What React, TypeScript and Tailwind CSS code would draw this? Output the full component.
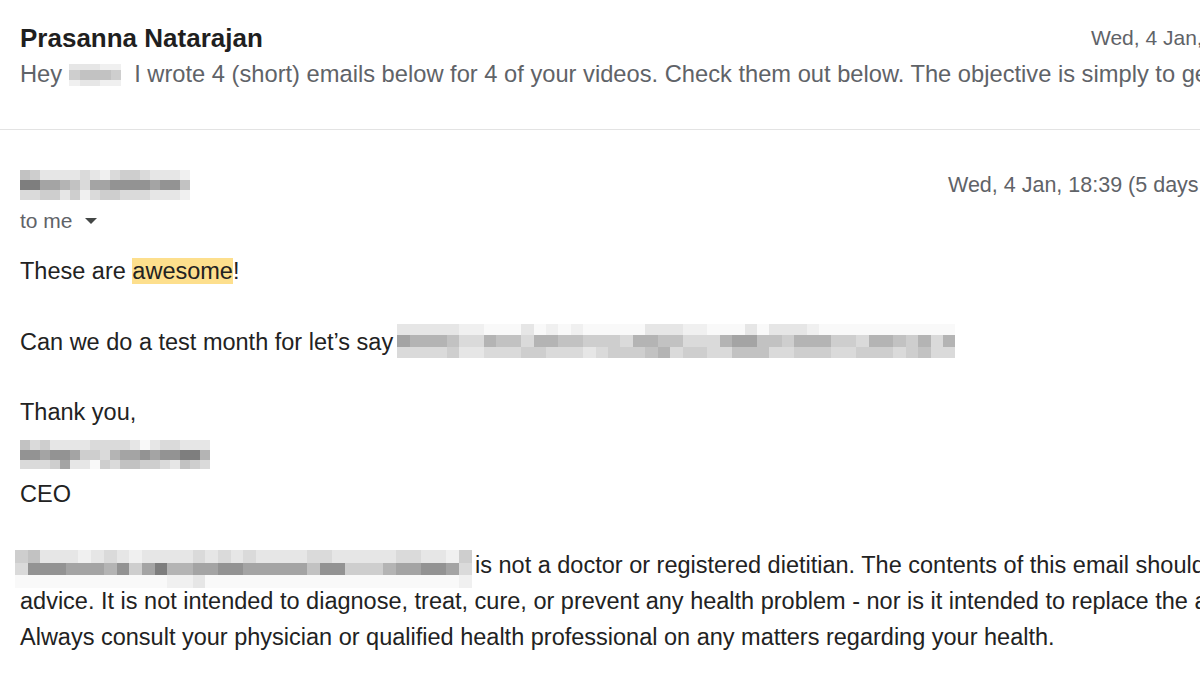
import clsx from 'clsx';

const SHADES: Record<string, string> = {
  '0': 'bg-[#f9f9f9]',
  '1': 'bg-[#f0f0f0]',
  '2': 'bg-[#e6e6e6]',
  '3': 'bg-[#dadada]',
  '4': 'bg-[#cecece]',
  '5': 'bg-[#c2c2c2]',
  '6': 'bg-[#b4b4b4]',
  '7': 'bg-[#a4a4a4]',
  '8': 'bg-[#939393]',
  '9': 'bg-[#7e7e7e]',
};

type Row = { h: string; cells: string };

// pixelated blur block, used where the screenshot hides names
function Mosaic({ rows, className }: { rows: Row[]; className?: string }) {
  return (
    <div className={clsx('flex shrink-0 flex-col', className)}>
      {rows.map((r, i) => (
        <div key={i} className={clsx('flex', r.h)}>
          {r.cells.split('').map((c, j) => (
            <div key={j} className={clsx('flex-1', SHADES[c])} />
          ))}
        </div>
      ))}
    </div>
  );
}

const snippetBlur: Row[] = [
  { h: 'h-[6px]', cells: '22211' },
  { h: 'h-[10px]', cells: '45554' },
  { h: 'h-[6px]', cells: '12211' },
];

const senderBlur: Row[] = [
  { h: 'h-[10px]', cells: '54222232134432221' },
  { h: 'h-[10px]', cells: '99776537788887885' },
  { h: 'h-[10px]', cells: '33442413443332221' },
];

const amountBlur: Row[] = [
  { h: 'h-[11px]', cells: '222221100020101000002221100020222100000000000' },
  { h: 'h-[12px]', cells: '766653365536655444366553336775546664436654636' },
  { h: 'h-[11px]', cells: '333342233344333234445634433555334443344434533' },
];

const signatureBlur: Row[] = [
  { h: 'h-[10px]', cells: '5342222333320233222' },
  { h: 'h-[10px]', cells: '8878874436778788996' },
  { h: 'h-[9px]', cells: '3334722043554432543' },
];

const companyBlur: Row[] = [
  { h: 'h-[13px]', cells: '452221232122223232322223322222332214' },
  { h: 'h-[12px]', cells: '388877768479667788777775884446778873' },
  { h: 'h-[13px]', cells: '000000000000112000000000000000000001' },
];

export default function App() {
  return (
    <div className="h-[691px] w-[1200px] overflow-hidden bg-white font-['Liberation_Sans',Arial,sans-serif]">
      {/* collapsed message above */}
      <div className="border-b border-[#e3e3e3] px-5 pb-[38px] pt-[22px]">
        <div className="flex h-[32px] items-center whitespace-nowrap">
          <div className="w-[1071px] shrink-0 text-[26px] font-bold text-[#1f1f1f]">Prasanna Natarajan</div>
          <span className="text-[21px] text-[#5f6368]">Wed, 4 Jan, 18:39</span>
        </div>
        <div className="mt-[5px] flex h-[32px] items-center whitespace-nowrap text-[23.7px] text-[#5f6368]">
          <span>Hey</span>
          <Mosaic rows={snippetBlur} className="ml-[7px] w-[52px]" />
          <span className="ml-[13px]">
            I wrote 4 (short) emails below for 4 of your videos. Check them out below. The objective is simply to get more views
          </span>
        </div>
      </div>

      {/* open reply */}
      <div className="px-5 text-[23.5px] text-[#222222]">
        <div className="mt-[40px] flex h-[30px] items-center whitespace-nowrap">
          <div className="w-[928px] shrink-0">
            <Mosaic rows={senderBlur} className="w-[170px]" />
          </div>
          <span className="text-[21.5px] text-[#5f6368]">Wed, 4 Jan, 18:39 (5 days ago)</span>
        </div>

        <div className="mt-[6px] flex h-[30px] items-center text-[21px] text-[#5f6368]">
          <span>to me</span>
          <svg width="12" height="6" viewBox="0 0 12 6" className="ml-[12px] fill-[#444746]">
            <path d="M0 0h12L6 6z" />
          </svg>
        </div>

        <p className="mt-[17px] leading-[36px]">
          These are <span className="bg-[#fddf8d]">awesome</span>!
        </p>

        <div className="mt-[36px] flex h-[36px] items-center whitespace-nowrap">
          <span>Can we do a test month for let’s say</span>
          <Mosaic rows={amountBlur} className="ml-[4px] -mt-[4px] w-[558px]" />
        </div>

        <p className="mt-[33px] leading-[36px]">Thank you,</p>
        <Mosaic rows={signatureBlur} className="mt-[10px] w-[190px]" />
        <p className="mt-[7px] leading-[36px]">CEO</p>

        <div className="mt-[35px] whitespace-nowrap leading-[36px]">
          <div className="flex h-[36px] items-start">
            <Mosaic rows={companyBlur} className="-ml-[5px] mt-[3px] w-[457px]" />
            <span className="ml-[3px]">
              is not a doctor or registered dietitian. The contents of this email should not be taken as medical
            </span>
          </div>
          <div>
            advice. It is not intended to diagnose, treat, cure, or prevent any health problem - nor is it intended to replace the advice of a physician.
          </div>
          <div>Always consult your physician or qualified health professional on any matters regarding your health.</div>
        </div>
      </div>
    </div>
  );
}
